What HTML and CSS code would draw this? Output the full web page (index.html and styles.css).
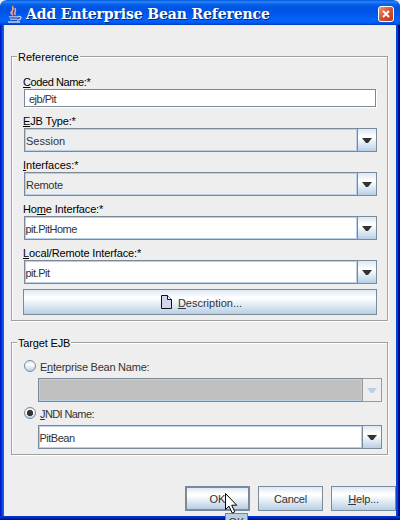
FILE: index.html
```html
<!DOCTYPE html>
<html lang="en">
<head>
<meta charset="utf-8">
<title>Add Enterprise Bean Reference</title>
<link rel="stylesheet" href="styles.css">
</head>
<body>
<div class="window">
  <header class="titlebar">
    <svg class="java" width="18" height="18" viewBox="0 0 18 18" fill="none">
      <path d="M7 10C3 7 9 6 6.500 1M9.500 10C7 8 11 7 9 3M6 9L4.500 7" stroke="#f0a08c" stroke-width="1.6"/>
      <path d="M3 12h9M4 14h7M12 11.500c5-1 3 4-1 3.500M2 17h12" stroke="#c4cfee" stroke-width="1.3"/>
      <path d="M3.500 13h8M5 15.500h6" stroke="#2b4590" stroke-width="1"/>
    </svg>
    <h1 class="title">Add Enterprise Bean Reference</h1>
    <button class="close" aria-label="Close"><svg width="8" height="8" viewBox="0 0 8 8"><path d="M1 1l6 6M7 1L1 7" stroke="#fff" stroke-width="2"/></svg></button>
  </header>
  <main class="content">
    <section class="group reference">
      <h2 class="legend legend-ref">Refererence</h2>
      <div class="label l-coded"><u>C</u>oded Name:*</div>
      <div class="input"><span>ejb/Pit</span></div>
      <div class="label l-type"><u>E</u>JB Type:*</div>
      <div class="combo readonly"><span class="value">Session</span><i class="drop"><svg width="10" height="5"><path d="M0 0h10L6 5H4z"/></svg></i></div>
      <div class="label"><u>I</u>nterfaces:*</div>
      <div class="combo readonly"><span class="value v-remote">Remote</span><i class="drop"><svg width="10" height="5"><path d="M0 0h10L6 5H4z"/></svg></i></div>
      <div class="label l-home">Ho<u>m</u>e Interface:*</div>
      <div class="combo"><span class="value v-home">pit.PitHome</span><i class="drop"><svg width="10" height="5"><path d="M0 0h10L6 5H4z"/></svg></i></div>
      <div class="label l-local"><u>L</u>ocal/Remote Interface:*</div>
      <div class="combo"><span class="value v-pit">pit.Pit</span><i class="drop"><svg width="10" height="5"><path d="M0 0h10L6 5H4z"/></svg></i></div>
      <button class="btn description">
        <svg width="11" height="14" viewBox="0 0 11 14"><path d="M.5.5h6l4 4v9H.5z" fill="#d5d5ec" stroke="#111"/><path d="M6.500.5v4h4" fill="#fff" stroke="#111"/></svg>
        <span><u>D</u>escription...</span>
      </button>
    </section>
    <section class="group target">
      <h2 class="legend legend-target">Target EJB</h2>
      <div class="radio-row"><i class="radio"></i><span class="r-bean">E<u>n</u>terprise Bean Name:</span></div>
      <div class="combo disabled"><span class="value"></span><i class="drop"><svg width="10" height="5"><path d="M0 0h10L6 5H4z"/></svg></i></div>
      <div class="radio-row second"><i class="radio on"></i><span class="r-jndi"><u>J</u>NDI Name:</span></div>
      <div class="combo"><span class="value v-bean">PitBean</span><i class="drop"><svg width="10" height="5"><path d="M0 0h10L6 5H4z"/></svg></i></div>
    </section>
    <footer class="actions">
      <button class="btn ok">OK</button>
      <button class="btn cancel">Cancel</button>
      <button class="btn help"><span><u>H</u>elp...</span></button>
    </footer>
  </main>
  <div class="tooltip">OK</div>
  <svg class="cursor" width="13" height="21" viewBox="0 0 13 21"><path d="M.5.5v16l3.500-3.300 3.200 6.800 2.600-1.200-3.100-6.600h5z" fill="#fff" stroke="#000"/></svg>
</div>
</body>
</html>
```
FILE: styles.css
```css
* { box-sizing: border-box; }
body {
  margin: 0;
  background: #e9edf8;
  font: 11px/14px "Liberation Sans", Arial, sans-serif;
  color: #000;
}
button { font: inherit; padding: 0; margin: 0; }
u {
  text-decoration: underline;
  text-decoration-thickness: 1px;
  text-underline-offset: 1px;
}
.window {
  position: relative;
  width: 400px;
  height: 520px;
  overflow: hidden;
  display: flex;
  flex-direction: column;
  padding: 0 4px 4px;
  border-radius: 7px 7px 0 0;
  background:
    linear-gradient(#0042df, #0020b0 50%, #00107c) bottom / 100% 4px no-repeat,
    linear-gradient(90deg, #0018c8 0, #0018c8 1px, #0048e8 2px, #1763ed 4px) left / 4px 100% no-repeat,
    linear-gradient(90deg, #0048dc 0, #0040d4 2px, #0010a0 2px, #00087c 4px) right / 4px 100% no-repeat;
}
.titlebar {
  height: 25px;
  flex: none;
  display: flex;
  align-items: center;
  margin: 0 -4px;
  padding: 3px 6px 0;
  background: linear-gradient(#0056d9 0, #2b84fa 8%, #0868ef 15%, #0054e0 28%, #0055e8 50%, #0064fc 80%, #005cf0 90%, #003cc0 100%);
}
.java { margin-right: 2px; }
.title {
  margin: 0;
  flex: 1;
  color: #fff;
  font: bold 14px/20px "DejaVu Serif", serif;
  letter-spacing: -0.12px;
  text-shadow: 1px 1px #082878;
  white-space: nowrap;
}
.close {
  width: 16px;
  height: 16px;
  display: grid;
  place-items: center;
  border: 1px solid #fff;
  border-radius: 3px;
  background: linear-gradient(135deg, #f09880, #d84f2d 50%, #c03b14);
}
.content {
  flex: 1;
  background: #eee;
  padding: 31px 8px 0 7px;
}
.group {
  border: 1px solid #a0a0a0;
  box-shadow: 1px 1px #fff, inset 1px 1px #fff;
  width: 377px;
}
.reference { height: 265px; padding: 0 10px 0 12px; }
.target { height: 113px; margin-top: 21px; padding: 0 5px 0 12px; }
.legend {
  width: max-content;
  height: 14px;
  margin: -7px 0 0 -7px;
  padding: 0 1px;
  background: #eee;
  font: inherit;
}
.legend-ref { margin-bottom: 11px; }
.legend-target { margin-bottom: 9px; letter-spacing: -0.15px; }
.label { height: 14px; margin-left: -1px; white-space: nowrap; }
.l-coded { letter-spacing: -0.4px; }
.l-type { letter-spacing: -0.15px; }
.l-home { letter-spacing: -0.15px; }
.l-local { letter-spacing: -0.12px; }
.input {
  height: 18px;
  width: 352px;
  margin-bottom: 7px;
  padding: 2px 4px;
  border: 1px solid #7a8a99;
  box-shadow: 1px 1px #fff;
  background: #fff;
  color: #333;
  letter-spacing: -0.5px;
}
.combo {
  display: flex;
  height: 24px;
  width: 353px;
  margin-bottom: 6px;
  border: 1px solid #7a8a99;
  background: #fff;
  color: #333;
}
.value {
  flex: 1;
  border: 1px solid #b8cfe5;
  line-height: 22px;
}
.v-remote { letter-spacing: -0.3px; }
.v-home, .v-pit, .v-bean { letter-spacing: -0.5px; text-indent: -0.5px; }
.readonly { background: #eee; }
.drop {
  width: 19px;
  display: grid;
  place-items: center;
  border-left: 1px solid #7a8a99;
  background: linear-gradient(#dde8f3, #fff 35%, #fff 40%, #b8cfe5);
}
.drop svg { fill: #333; }
.target .combo { width: 344px; margin: 0 0 0 14px; }
.disabled { background: #c0c0c0; }
.target .disabled { border-right: 0; }
.disabled .drop {
  margin: -1px 0;
  width: 20px;
  border: 1px solid #999;
  background: #eee;
}
.disabled .drop svg { fill: #b8cfe5; }
.btn {
  border: 1px solid #7a8a99;
  background: linear-gradient(#dde8f3, #fff 30%, #fff 35%, #b8cfe5);
  color: #333;
}
.description {
  width: 354px;
  height: 26px;
  margin: -1px 0 0 -1px;
  padding-left: 3px;
  display: flex;
  align-items: center;
  justify-content: center;
  gap: 6px;
}
.description span { padding-top: 2px; }
.radio-row {
  display: flex;
  align-items: center;
  gap: 4px;
  height: 14px;
  margin-bottom: 5px;
  color: #333;
}
.radio-row span { padding-top: 2px; }
.r-bean { letter-spacing: -0.24px; }
.r-jndi { letter-spacing: -0.6px; }
.radio-row.second { margin: 4px 0 5px; }
.radio {
  width: 12px;
  height: 12px;
  border: 1px solid #7a8a99;
  border-radius: 50%;
  background: linear-gradient(#dde8f3, #fff 35%, #b8cfe5);
}
.on { background: radial-gradient(circle, #333 0 2.800px, #fff0 3.400px), linear-gradient(#dde8f3, #fff 35%, #b8cfe5); }
.actions {
  display: flex;
  gap: 8px;
  margin: 31px -8px 0 174px;
}
.actions .btn { width: 65px; height: 25px; flex: none; }
.actions .ok { border-width: 2px; }
.actions .cancel { letter-spacing: -0.2px; }
.actions .help { letter-spacing: -0.15px; }
.tooltip {
  position: absolute;
  left: 225px;
  top: 513px;
  width: 23px;
  height: 20px;
  border: 1px solid #6382bf;
  background: #b8cfe5;
  color: #333;
  text-align: center;
  padding-top: 1px;
}
.cursor { position: absolute; left: 225px; top: 493px; }
```
